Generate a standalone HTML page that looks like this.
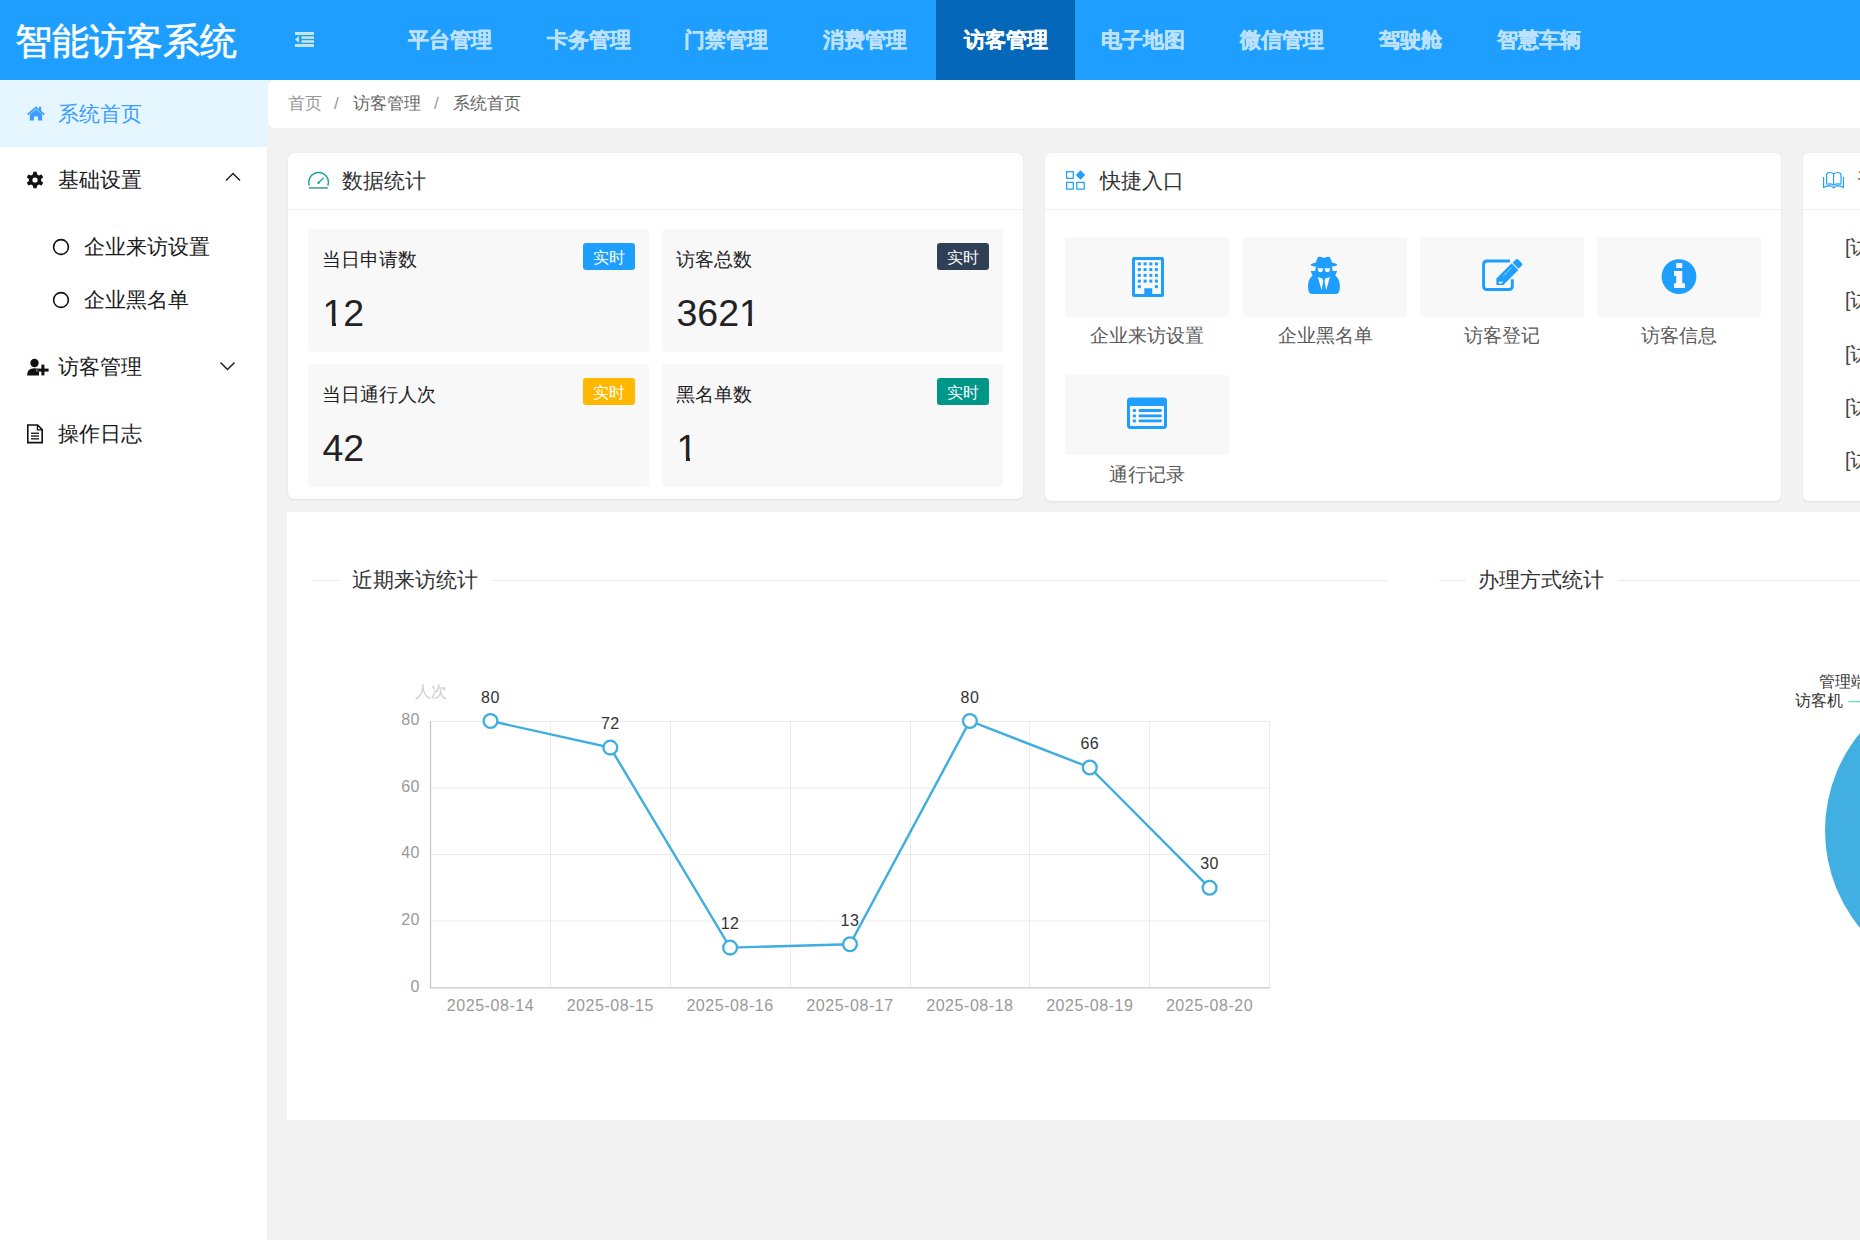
<!DOCTYPE html>
<html><head><meta charset="utf-8">
<style>
*{margin:0;padding:0;box-sizing:border-box}
html,body{width:1860px;height:1240px;overflow:hidden;background:#f2f2f2;font-family:"Liberation Sans",sans-serif;color:#333}
.abs{position:absolute}
.t{position:absolute;white-space:nowrap;line-height:1}
#hdr{position:absolute;left:0;top:0;width:1860px;height:80px;background:#1E9FFF}
.nav{position:absolute;top:0;height:80px;line-height:80px;font-size:21.3px;font-weight:bold;color:#BDE2FF;-webkit-text-stroke:0.3px currentColor;text-align:center;white-space:nowrap}
.nav.on{background:#0467B9;color:#fff}
#side{position:absolute;left:0;top:80px;width:267px;height:1160px;background:#fff}
.card{position:absolute;background:#fff;border-radius:6px;box-shadow:0 1px 2px 0 rgba(0,0,0,.07),0 0 1px 0 rgba(0,0,0,.05)}
.ch{position:absolute;left:0;top:0;right:0;height:57px;border-bottom:1px solid #f0f0f0}
.stat{position:absolute;width:341px;height:123px;background:#f8f8f8;border-radius:4px}
.stat .l{position:absolute;left:14px;top:22px;font-size:18.8px;line-height:1;color:#1f1f1f;white-space:nowrap}
.stat .n{position:absolute;left:14.5px;top:66px;font-size:37.5px;line-height:1;color:#222}
.badge{position:absolute;left:275px;top:14px;width:52px;height:27px;border-radius:3px;color:#fff;font-size:16.4px;line-height:29.4px;text-align:center}
.qk{position:absolute;width:164px;height:80px;background:#f8f8f8;border-radius:3px}
.ql{position:absolute;width:164px;text-align:center;font-size:19.2px;color:#5a5a5a;line-height:1;white-space:nowrap}
.ntc{position:absolute;left:42px;font-size:19.5px;color:#444;line-height:1;white-space:nowrap}
</style></head><body>
<div id="hdr">
  <div class="t" style="left:14.5px;top:23px;font-size:37.3px;color:#fff;-webkit-text-stroke:0.55px #fff">智能访客系统</div>
  <svg class="abs" style="left:295px;top:32px" width="20" height="15" viewBox="0 0 20 15">
    <rect x="0" y="0" width="19" height="3" fill="#C4E6DC"/>
    <rect x="6.5" y="4.3" width="12.5" height="2.6" fill="#C4E6DC"/>
    <rect x="6.5" y="8.2" width="12.5" height="2.6" fill="#C4E6DC"/>
    <rect x="0" y="12" width="19" height="3" fill="#C4E6DC"/>
    <path d="M0 7.5 L4 3.9 L4 11.1Z" fill="#C4E6DC"/>
  </svg>
  <div class="nav" style="left:380px;width:139px">平台管理</div>
  <div class="nav" style="left:519px;width:139px">卡务管理</div>
  <div class="nav" style="left:656.5px;width:139px">门禁管理</div>
  <div class="nav" style="left:795.7px;width:139px">消费管理</div>
  <div class="nav on" style="left:936px;width:139px">访客管理</div>
  <div class="nav" style="left:1073px;width:139px">电子地图</div>
  <div class="nav" style="left:1212px;width:139px">微信管理</div>
  <div class="nav" style="left:1351px;width:118px">驾驶舱</div>
  <div class="nav" style="left:1469px;width:139px">智慧车辆</div>
</div>

<div id="side">
  <div class="abs" style="left:0;top:0;width:267px;height:67px;background:#E6F6FF"></div>
  <!-- home icon -->
  <svg class="abs" style="left:27px;top:26px" width="18" height="15" viewBox="0 0 18 15">
    <path d="M9 0.3 L0.2 8 L1.4 9.3 L9 2.6 L16.6 9.3 L17.8 8 L14.2 4.8 L14.2 0.8 L12 0.8 L12 2.9 Z" fill="#3A9DFF"/>
    <path d="M2.8 8.6 L9 3.3 L15.2 8.6 L15.2 14.6 L11 14.6 L11 10.4 L7 10.4 L7 14.6 L2.8 14.6 Z" fill="#3A9DFF"/>
  </svg>
  <div class="t" style="left:58px;top:24px;font-size:21.4px;color:#3A9DFF">系统首页</div>

  <!-- gear -->
  <svg class="abs" style="left:26px;top:91px" width="18" height="18" viewBox="-9 -9 18 18">
    <g fill="#111">
      <path d="M-1.6 -8.3 L1.6 -8.3 L2.2 -5.6 L4 -4.6 L6.6 -5.5 L8.2 -2.8 L6.1 -1 L6.1 1 L8.2 2.8 L6.6 5.5 L4 4.6 L2.2 5.6 L1.6 8.3 L-1.6 8.3 L-2.2 5.6 L-4 4.6 L-6.6 5.5 L-8.2 2.8 L-6.1 1 L-6.1 -1 L-8.2 -2.8 L-6.6 -5.5 L-4 -4.6 L-2.2 -5.6 Z"/>
    </g>
    <circle cx="0" cy="0" r="2.6" fill="#fff"/>
  </svg>
  <div class="t" style="left:58px;top:90px;font-size:21.4px;color:#1a1a1a">基础设置</div>
  <svg class="abs" style="left:225px;top:92px" width="16" height="10" viewBox="0 0 16 10"><path d="M1 8.5 L8 1.5 L15 8.5" fill="none" stroke="#222" stroke-width="1.5"/></svg>

  <svg class="abs" style="left:52px;top:158px" width="18" height="18" viewBox="0 0 18 18"><circle cx="9" cy="9" r="7.4" fill="none" stroke="#111" stroke-width="1.6"/></svg>
  <div class="t" style="left:84px;top:157px;font-size:21.4px;color:#1a1a1a">企业来访设置</div>
  <svg class="abs" style="left:52px;top:211px" width="18" height="18" viewBox="0 0 18 18"><circle cx="9" cy="9" r="7.4" fill="none" stroke="#111" stroke-width="1.6"/></svg>
  <div class="t" style="left:84px;top:210px;font-size:21.4px;color:#1a1a1a">企业黑名单</div>

  <!-- user plus -->
  <svg class="abs" style="left:26px;top:278px" width="24" height="18" viewBox="0 0 24 18">
    <circle cx="8.5" cy="5" r="4.2" fill="#111"/>
    <path d="M1 17.4 Q1 10.2 8.5 10.2 Q11 10.2 12.6 11 L10.6 11 L10.6 13.6 L13 13.6 L13 17.4 Z" fill="#111"/>
    <rect x="11.2" y="10.6" width="11.4" height="3" fill="#111"/>
    <rect x="15.4" y="6.6" width="3" height="10.8" fill="#111"/>
  </svg>
  <div class="t" style="left:58px;top:277px;font-size:21.4px;color:#1a1a1a">访客管理</div>
  <svg class="abs" style="left:219px;top:281px" width="17" height="10" viewBox="0 0 17 10"><path d="M1.5 1.5 L8.5 8.5 L15.5 1.5" fill="none" stroke="#222" stroke-width="1.5"/></svg>

  <!-- file -->
  <svg class="abs" style="left:26px;top:344px" width="18" height="20" viewBox="0 0 18 20">
    <path d="M1.8 1 L11.6 1 L16.2 5.6 L16.2 18.6 L1.8 18.6 Z" fill="none" stroke="#111" stroke-width="1.6"/>
    <path d="M11.4 1.2 L11.4 5.8 L16 5.8" fill="none" stroke="#111" stroke-width="1.3"/>
    <rect x="5" y="8.6" width="8" height="1.3" fill="#111"/>
    <rect x="5" y="11.4" width="8" height="1.3" fill="#111"/>
    <rect x="5" y="14.2" width="8" height="1.3" fill="#111"/>
  </svg>
  <div class="t" style="left:58px;top:344px;font-size:21.4px;color:#1a1a1a">操作日志</div>
</div>

<div class="abs" style="left:268px;top:80px;width:1600px;height:48px;background:#fff;border-radius:6px;box-shadow:0 0 1px 0 rgba(0,0,0,.05)"></div>
<div class="t" style="left:288px;top:95px;font-size:17.2px;color:#999">首页</div>
<div class="t" style="left:334px;top:95px;font-size:17.2px;color:#999">/</div>
<div class="t" style="left:353px;top:95px;font-size:17.2px;color:#666">访客管理</div>
<div class="t" style="left:434px;top:95px;font-size:17.2px;color:#999">/</div>
<div class="t" style="left:453px;top:95px;font-size:17.2px;color:#666">系统首页</div>

<!-- card 1 -->
<div class="card" style="left:288px;top:153px;width:735px;height:346px">
  <div class="ch"></div>
  <svg class="abs" style="left:19px;top:18px" width="23" height="19" viewBox="0 0 23 19">
    <path d="M2.4 14.6 A9.8 9.8 0 1 1 20.8 14.6" fill="none" stroke="#17A0A6" stroke-width="1.45"/>
    <path d="M11.4 11.8 L16.2 7.2" stroke="#17A0A6" stroke-width="1.2" stroke-linecap="round"/>
    <circle cx="11.5" cy="11.7" r="1.25" fill="#17A0A6"/>
    <rect x="1.9" y="16" width="19" height="1.8" fill="#5AAFA5"/>
  </svg>
  <div class="t" style="left:54px;top:18px;font-size:20.6px;color:#333">数据统计</div>
  <div class="stat" style="left:20px;top:76px"><div class="l">当日申请数</div><div class="n">12</div><div class="badge" style="background:#1E9FFF">实时</div></div>
  <div class="stat" style="left:374px;top:76px"><div class="l">访客总数</div><div class="n">3621</div><div class="badge" style="background:#2F4056">实时</div></div>
  <div class="stat" style="left:20px;top:211px"><div class="l">当日通行人次</div><div class="n">42</div><div class="badge" style="background:#FFB800">实时</div></div>
  <div class="stat" style="left:374px;top:211px"><div class="l">黑名单数</div><div class="n">1</div><div class="badge" style="background:#009688">实时</div></div>
</div>


<!-- hide foot of digit 1 -->
<div class="abs" style="left:324px;top:322.6px;width:8px;height:3.6px;background:#f8f8f8"></div>
<div class="abs" style="left:336px;top:322.6px;width:7px;height:3.6px;background:#f8f8f8"></div>
<div class="abs" style="left:741px;top:322.6px;width:7px;height:3.6px;background:#f8f8f8"></div>
<div class="abs" style="left:752px;top:322.6px;width:7px;height:3.6px;background:#f8f8f8"></div>
<div class="abs" style="left:678px;top:457.6px;width:8px;height:3.6px;background:#f8f8f8"></div>
<div class="abs" style="left:690px;top:457.6px;width:7px;height:3.6px;background:#f8f8f8"></div>

<!-- card 2 -->
<div class="card" style="left:1045px;top:153px;width:736px;height:348px">
  <div class="ch"></div>
  <svg class="abs" style="left:19px;top:16px" width="24" height="24" viewBox="1064 169 24 24">
    <g fill="none" stroke="#1E9FFF" stroke-width="1.25">
      <rect x="1066.6" y="171.7" width="6.7" height="6.6"/>
      <rect x="1066.6" y="182.4" width="6.7" height="6.7"/>
      <rect x="1076.8" y="182.4" width="7.4" height="6.7"/>
    </g>
    <path d="M1080.5 170.3 L1085.2 175 L1080.5 179.7 L1075.8 175 Z" fill="#1E9FFF"/>
  </svg>
  <div class="t" style="left:55px;top:18px;font-size:20.9px;color:#333">快捷入口</div>

  <div class="qk" style="left:20px;top:84px"></div>
  <svg class="abs" style="left:87px;top:104px" width="32" height="40" viewBox="0 0 32 40">
    <path d="M0 2 Q0 0 2 0 L30 0 Q32 0 32 2 L32 38 Q32 40 30 40 L2 40 Q0 40 0 38 Z M3 3 L3 37 L12.3 37 L12.3 31.2 L20.2 31.2 L20.2 37 L29 37 L29 3 Z" fill="#1E9FFF" fill-rule="evenodd"/>
    <g fill="#1E9FFF">
      <rect x="5.8" y="5.4" width="3" height="3"/><rect x="11.6" y="5.4" width="3" height="3"/><rect x="17.3" y="5.4" width="3" height="3"/><rect x="22.9" y="5.4" width="3" height="3"/>
      <rect x="5.8" y="11.1" width="3" height="3"/><rect x="11.6" y="11.1" width="3" height="3"/><rect x="17.3" y="11.1" width="3" height="3"/><rect x="22.9" y="11.1" width="3" height="3"/>
      <rect x="5.8" y="16.9" width="3" height="3"/><rect x="11.6" y="16.9" width="3" height="3"/><rect x="17.3" y="16.9" width="3" height="3"/><rect x="22.9" y="16.9" width="3" height="3"/>
      <rect x="5.8" y="22.6" width="3" height="3"/><rect x="11.6" y="22.6" width="3" height="3"/><rect x="17.3" y="22.6" width="3" height="3"/><rect x="22.9" y="22.6" width="3" height="3"/>
      <rect x="5.8" y="28.2" width="3" height="3"/><rect x="22.9" y="28.2" width="3" height="3"/>
    </g>
  </svg>
  <div class="ql" style="left:20px;top:173px">企业来访设置</div>

  <div class="qk" style="left:198px;top:84px"></div>
  <svg class="abs" style="left:255px;top:97px" width="50" height="50" viewBox="1300 250 50 50">
    <path d="M1318 256.9 Q1321 256.6 1323.9 258 Q1326.7 256.6 1329.7 256.9 Q1331 258.8 1332.1 262.4 Q1337.6 263.8 1337.2 265 Q1335.5 267 1323.9 267 Q1312.3 267 1310.6 265 Q1310.2 263.8 1315.8 262.4 Q1316.9 258.8 1318 256.9 Z" fill="#1E9FFF"/>
    <path d="M1315.8 266.6 L1332 266.6 L1332.6 271.1 L1337.2 271.1 L1335.2 275.6 Q1339.9 279 1339.9 286.5 Q1339.9 293.9 1336 293.9 L1311.8 293.9 Q1308 293.9 1308 286.5 Q1308 279 1312.6 275.6 L1310.6 271.1 L1315.2 271.1 Z" fill="#1E9FFF"/>
    <path d="M1317.6 268.3 L1323.3 268.3 L1322.4 271.3 Q1322 271.9 1321.2 271.9 L1319.4 271.9 Q1318.7 271.9 1318.4 271.3 Z" fill="#f8f8f8"/>
    <path d="M1330.2 268.3 L1324.5 268.3 L1325.4 271.3 Q1325.8 271.9 1326.6 271.9 L1328.4 271.9 Q1329.1 271.9 1329.4 271.3 Z" fill="#f8f8f8"/>
    <path d="M1317.8 276.9 L1322.4 278.6 L1323.2 281 L1321.6 290.2 Z" fill="#f8f8f8"/>
    <path d="M1329.9 276.9 L1325.3 278.6 L1324.5 281 L1326.2 290.2 Z" fill="#f8f8f8"/>
  </svg>
  <div class="ql" style="left:198px;top:173px">企业黑名单</div>

  <div class="qk" style="left:375px;top:84px"></div>
  <svg class="abs" style="left:435px;top:102px" width="46" height="40" viewBox="1480 255 46 40">
    <path d="M1510 260.95 L1487.2 260.95 Q1483.55 260.95 1483.55 264.6 L1483.55 285.9 Q1483.55 289.55 1487.2 289.55 L1508.7 289.55 Q1512.35 289.55 1512.35 285.9 L1512.35 279.3" fill="none" stroke="#1E9FFF" stroke-width="2.9"/>
    <path d="M1496.4 278.5 L1511.6 263.3 L1518.3 270 L1503.4 284.9 L1496.4 284.9 Z" fill="#1E9FFF"/>
    <path d="M1498.6 282.6 L1499.9 281.3 L1500.9 282.3 L1501.9 281.3 L1502.9 282.3 L1501.3 283.4 L1498.6 283.4 Z" fill="#f8f8f8"/>
    <path d="M1503.6 275.6 L1511.8 267.4" stroke="#f8f8f8" stroke-width="0.6"/>
    <g transform="translate(-0.6 1.1)"><path d="M1513.2 261.7 L1516.3 258.6 Q1517.6 257.3 1518.9 258.6 L1522.3 262 Q1523.6 263.3 1522.3 264.6 L1519.2 267.7 Z" fill="#1E9FFF"/></g>
  </svg>
  <div class="ql" style="left:375px;top:173px">访客登记</div>

  <div class="qk" style="left:552px;top:84px"></div>
  <svg class="abs" style="left:616px;top:106px" width="36" height="36" viewBox="0 0 36 36">
    <circle cx="18" cy="17.6" r="17.4" fill="#1E9FFF"/>
    <rect x="15.2" y="4.1" width="6.1" height="4.9" fill="#f8f8f8"/>
    <path d="M13 12.1 L21.3 12.1 L21.3 24.2 L24 24.2 L24 29 L13 29 L13 24.2 L15.2 24.2 L15.2 17 L13 17 Z" fill="#f8f8f8"/>
  </svg>
  <div class="ql" style="left:552px;top:173px">访客信息</div>

  <div class="qk" style="left:20px;top:222px"></div>
  <svg class="abs" style="left:82px;top:244px" width="40" height="32" viewBox="0 0 40 32">
    <path d="M0 4 Q0 0.6 3.4 0.6 L36.6 0.6 Q40 0.6 40 4 L40 28.6 Q40 32 36.6 32 L3.4 32 Q0 32 0 28.6 Z M3 9 L3 29 L37 29 L37 9 Z" fill="#1E9FFF" fill-rule="evenodd"/>
    <g fill="#1E9FFF">
      <rect x="5.8" y="12" width="3.1" height="2.9" rx="0.6"/><rect x="11.6" y="12" width="23.2" height="2.9" rx="1.2"/>
      <rect x="5.8" y="17.4" width="3.1" height="2.9" rx="0.6"/><rect x="11.6" y="17.4" width="23.2" height="2.9" rx="1.2"/>
      <rect x="5.8" y="22.4" width="3.1" height="2.9" rx="0.6"/><rect x="11.6" y="22.4" width="23.2" height="2.9" rx="1.2"/>
    </g>
  </svg>
  <div class="ql" style="left:20px;top:312px">通行记录</div>
</div>

<!-- card 3 -->
<div class="card" style="left:1803px;top:153px;width:300px;height:348px">
  <div class="ch"></div>
  <svg class="abs" style="left:17px;top:15px" width="28" height="24" viewBox="1820 168 28 24">
    <g fill="none" stroke="#1E9FFF" stroke-width="1.15" stroke-linejoin="round">
      <path d="M1833.6 184.2 L1833.6 174 Q1831.8 172.4 1829.8 172.5 Q1827 172.6 1826.6 174.8 L1826.6 184.2"/>
      <path d="M1833.6 174 Q1835.4 172.4 1837.4 172.5 Q1840.6 172.6 1841 174.8 L1841 184.2"/>
      <path d="M1826.6 184.2 Q1830.4 183.2 1833.6 184.9 Q1836.8 183.2 1841 184.2"/>
      <path d="M1823.6 177 L1823.6 187.4 Q1826.5 185.6 1829.7 185.6 Q1832 185.8 1833.6 187.8 Q1835.2 185.8 1837.5 185.6 Q1840.7 185.6 1843.4 187.4 L1843.4 177"/>
    </g>
  </svg>
  <div class="t" style="left:55px;top:18px;font-size:20.9px;color:#333">访客公告</div>
  <div class="ntc" style="top:85px">[访客通知] 欢迎使用智能访客系统</div>
  <div class="ntc" style="top:138px">[访客通知] 欢迎使用智能访客系统</div>
  <div class="ntc" style="top:192px">[访客通知] 欢迎使用智能访客系统</div>
  <div class="ntc" style="top:245px">[访客通知] 欢迎使用智能访客系统</div>
  <div class="ntc" style="top:298px">[访客通知] 欢迎使用智能访客系统</div>
</div>

<!-- chart panel -->
<div class="abs" style="left:287px;top:512px;width:1580px;height:608px;background:#fff"></div>
<div class="abs" style="left:313px;top:580px;width:27px;height:1px;background:#e8e8e8"></div>
<div class="abs" style="left:492px;top:580px;width:895px;height:1px;background:#e8e8e8"></div>
<div class="t" style="left:352px;top:570px;font-size:21.4px;color:#333">近期来访统计</div>
<div class="abs" style="left:1439px;top:580px;width:27px;height:1px;background:#e8e8e8"></div>
<div class="abs" style="left:1618px;top:580px;width:300px;height:1px;background:#e8e8e8"></div>
<div class="t" style="left:1478px;top:570px;font-size:21.4px;color:#333">办理方式统计</div>

<svg class="abs" style="left:287px;top:512px" width="1573" height="608" viewBox="287 512 1573 608" font-family="Liberation Sans, sans-serif">
  <g stroke="#ebebeb" stroke-width="1">
    <line x1="430.5" y1="721.5" x2="1269.5" y2="721.5"/>
    <line x1="430.5" y1="788" x2="1269.5" y2="788"/>
    <line x1="430.5" y1="854.5" x2="1269.5" y2="854.5"/>
    <line x1="430.5" y1="921" x2="1269.5" y2="921"/>
    <line x1="550.5" y1="721" x2="550.5" y2="988"/>
    <line x1="670.5" y1="721" x2="670.5" y2="988"/>
    <line x1="790.5" y1="721" x2="790.5" y2="988"/>
    <line x1="910.5" y1="721" x2="910.5" y2="988"/>
    <line x1="1029.5" y1="721" x2="1029.5" y2="988"/>
    <line x1="1149.5" y1="721" x2="1149.5" y2="988"/>
    <line x1="1269.5" y1="721" x2="1269.5" y2="988"/>
  </g>
  <line x1="430.5" y1="721" x2="430.5" y2="988.5" stroke="#c8c8c8" stroke-width="1.3"/>
  <line x1="430" y1="987.8" x2="1270" y2="987.8" stroke="#c8c8c8" stroke-width="1.3"/>
  <g fill="#999" font-size="16" text-anchor="end" letter-spacing="0.5">
    <text x="420" y="725">80</text>
    <text x="420" y="792">60</text>
    <text x="420" y="858">40</text>
    <text x="420" y="925">20</text>
    <text x="420" y="992">0</text>
  </g>
  <text x="431" y="697" fill="#ccc" font-size="16" text-anchor="middle">人次</text>
  <g fill="#999" font-size="16" text-anchor="middle" letter-spacing="0.55">
    <text x="490.5" y="1011">2025-08-14</text>
    <text x="610.3" y="1011">2025-08-15</text>
    <text x="730.1" y="1011">2025-08-16</text>
    <text x="850" y="1011">2025-08-17</text>
    <text x="969.9" y="1011">2025-08-18</text>
    <text x="1089.8" y="1011">2025-08-19</text>
    <text x="1209.6" y="1011">2025-08-20</text>
  </g>
  <polyline points="490.5,721 610.3,747.6 730.1,947.6 850,944.3 969.9,721 1089.8,767.5 1209.6,887.8" fill="none" stroke="#3EADE0" stroke-width="2.4"/>
  <g fill="#fff" stroke="#3EADE0" stroke-width="2.3">
    <circle cx="490.5" cy="721" r="6.9"/>
    <circle cx="610.3" cy="747.6" r="6.9"/>
    <circle cx="730.1" cy="947.6" r="6.9"/>
    <circle cx="850" cy="944.3" r="6.9"/>
    <circle cx="969.9" cy="721" r="6.9"/>
    <circle cx="1089.8" cy="767.5" r="6.9"/>
    <circle cx="1209.6" cy="887.8" r="6.9"/>
  </g>
  <g fill="#333" font-size="16" text-anchor="middle" letter-spacing="0.5">
    <text x="490.5" y="703">80</text>
    <text x="610.3" y="729">72</text>
    <text x="730.1" y="929">12</text>
    <text x="850" y="926">13</text>
    <text x="969.9" y="703">80</text>
    <text x="1089.8" y="749">66</text>
    <text x="1209.6" y="869">30</text>
  </g>
  <!-- pie -->
  <circle cx="1978" cy="830.5" r="153" fill="#41AFE1"/>
  <line x1="1848.4" y1="701.6" x2="1870" y2="701.6" stroke="#5EE0B8" stroke-width="1.3"/>
  <text x="1842.5" y="706" fill="#333" font-size="16.3" text-anchor="end">访客机</text>
  <text x="1819" y="687" fill="#333" font-size="16.3">管理端</text>
</svg>

<div class="abs" style="left:287px;top:1120px;width:1573px;height:120px;background:#f2f2f2"></div>
</body></html>
